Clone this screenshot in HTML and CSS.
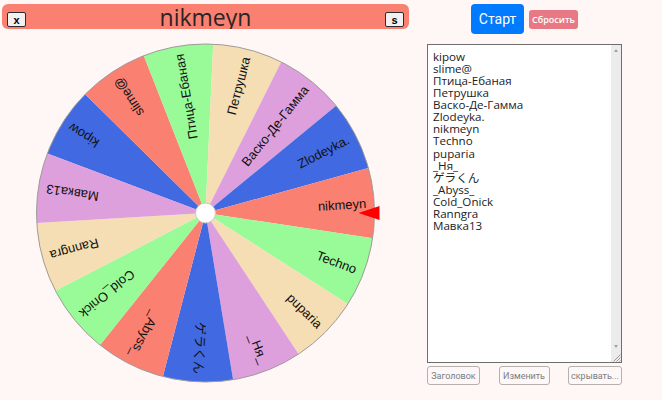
FILE: index.html
```html
<!DOCTYPE html>
<html lang="ru">
<head>
<meta charset="utf-8">
<title>Колесо</title>
<link rel="stylesheet" href="styles.css">
</head>
<body>
<div class="page">
  <div class="left">
    <div class="title-bar">
      <button class="tiny-btn">x</button>
      <span class="title">nikmeyn</span>
      <button class="tiny-btn">s</button>
    </div>
    <svg class="wheel" width="407" height="366" viewBox="0 0 407 366">
      <g transform="translate(203.5,184)">
        <!-- one 24° sector per name, rotated into place -->
        <g class="sectors">
          <path class="c-blue"   transform="rotate(-159.4)" d="M0,0 L169,0 A169,169 0 0,1 154.389,68.739 Z"/>
          <path class="c-salmon" transform="rotate(-135.4)" d="M0,0 L169,0 A169,169 0 0,1 154.389,68.739 Z"/>
          <path class="c-green"  transform="rotate(-111.4)" d="M0,0 L169,0 A169,169 0 0,1 154.389,68.739 Z"/>
          <path class="c-wheat"  transform="rotate(-87.4)"  d="M0,0 L169,0 A169,169 0 0,1 154.389,68.739 Z"/>
          <path class="c-plum"   transform="rotate(-63.4)"  d="M0,0 L169,0 A169,169 0 0,1 154.389,68.739 Z"/>
          <path class="c-blue"   transform="rotate(-39.4)"  d="M0,0 L169,0 A169,169 0 0,1 154.389,68.739 Z"/>
          <path class="c-salmon" transform="rotate(-15.4)"  d="M0,0 L169,0 A169,169 0 0,1 154.389,68.739 Z"/>
          <path class="c-green"  transform="rotate(8.6)"    d="M0,0 L169,0 A169,169 0 0,1 154.389,68.739 Z"/>
          <path class="c-wheat"  transform="rotate(32.6)"   d="M0,0 L169,0 A169,169 0 0,1 154.389,68.739 Z"/>
          <path class="c-plum"   transform="rotate(56.6)"   d="M0,0 L169,0 A169,169 0 0,1 154.389,68.739 Z"/>
          <path class="c-blue"   transform="rotate(80.6)"   d="M0,0 L169,0 A169,169 0 0,1 154.389,68.739 Z"/>
          <path class="c-salmon" transform="rotate(104.6)"  d="M0,0 L169,0 A169,169 0 0,1 154.389,68.739 Z"/>
          <path class="c-green"  transform="rotate(128.6)"  d="M0,0 L169,0 A169,169 0 0,1 154.389,68.739 Z"/>
          <path class="c-wheat"  transform="rotate(152.6)"  d="M0,0 L169,0 A169,169 0 0,1 154.389,68.739 Z"/>
          <path class="c-plum"   transform="rotate(176.6)"  d="M0,0 L169,0 A169,169 0 0,1 154.389,68.739 Z"/>
        </g>
        <circle class="rim" r="169"/>
        <!-- labels run along each sector's middle, ending near the rim -->
        <g class="labels">
          <text transform="rotate(-147.4)" x="161" y="4.5">kipow</text>
          <text transform="rotate(-123.4)" x="161" y="4.5">slime@</text>
          <text transform="rotate(-99.4)"  x="161" y="4.5">Птица-Ебаная</text>
          <text transform="rotate(-75.4)"  x="161" y="4.5">Петрушка</text>
          <text transform="rotate(-51.4)"  x="161" y="4.5">Васко-Де-Гамма</text>
          <text transform="rotate(-27.4)"  x="161" y="4.5">Zlodeyka.</text>
          <text transform="rotate(-3.4)"   x="161" y="4.5">nikmeyn</text>
          <text transform="rotate(20.6)"   x="161" y="4.5">Techno</text>
          <text transform="rotate(44.6)"   x="161" y="4.5">puparia</text>
          <text transform="rotate(68.6)"   x="161" y="4.5">_Ня_</text>
          <text transform="rotate(92.6)"   x="161" y="4.5">ゲラくん</text>
          <text transform="rotate(116.6)"  x="161" y="4.5">_Abyss_</text>
          <text transform="rotate(140.6)"  x="161" y="4.5">Cold_Onick</text>
          <text transform="rotate(164.6)"  x="161" y="4.5">Ranngra</text>
          <text transform="rotate(188.6)"  x="161" y="4.5">Мавка13</text>
        </g>
        <circle class="hub" r="10"/>
        <polygon class="pointer" points="153,0 174,-7 174,7"/>
      </g>
    </svg>
  </div>

  <div class="right">
    <div class="actions">
      <button class="btn-start">Старт</button>
      <button class="btn-reset">Сбросить</button>
    </div>
    <div class="list-box">
      <textarea class="names" spellcheck="false">kipow
slime@
Птица-Ебаная
Петрушка
Васко-Де-Гамма
Zlodeyka.
nikmeyn
Techno
puparia
_Ня_
ゲラくん
_Abyss_
Cold_Onick
Ranngra
Мавка13</textarea>
      <div class="vscroll" aria-hidden="true">
        <span class="arrow"><span class="tri-up"></span></span>
        <span class="track"></span>
        <span class="arrow"><span class="tri-down"></span></span>
        <span class="grip">
          <svg width="10" height="10" viewBox="0 0 10 10">
            <path d="M9.5,2.5 L2.5,9.5 M9.5,5.5 L5.5,9.5 M9.5,8.5 L8.5,9.5"/>
          </svg>
        </span>
      </div>
    </div>
    <div class="tools">
      <button class="tool-btn tool-title">Заголовок</button>
      <button class="tool-btn tool-edit">Изменить</button>
      <button class="tool-btn tool-hide">скрывать...</button>
    </div>
  </div>
</div>
</body>
</html>
```

FILE: styles.css
```css
html, body {
  margin: 0;
  background: #fef7f6;
}

body {
  font-family: "Open Sans", "Noto Sans", "Noto Sans CJK JP", sans-serif;
  color: #212529;
}

.page {
  display: flex;
  gap: 18px;
  padding: 4px 0 0 2px;
}

/* left column: title + wheel */
.left {
  width: 407px;
  display: flex;
  flex-direction: column;
}

.title-bar {
  height: 25px;
  background: #fa8072;
  border-radius: 6px;
  display: flex;
  justify-content: space-between;
  align-items: flex-start;
  padding: 0 5px;
  overflow: hidden;
}

.title {
  flex: 1;
  text-align: center;
  font-size: 23px;
  line-height: 27px;
  color: #2a2422;
}

.tiny-btn {
  margin-top: 8px;
  width: 19px;
  height: 15px;
  padding: 0;
  border: 1px solid #2b2b2b;
  border-radius: 2px;
  background: #f1f1f1;
  font-family: "Liberation Sans", Arial, sans-serif;
  font-weight: bold;
  font-size: 11px;
  line-height: 12px;
  color: #000;
}

.wheel {
  display: block;
}

.sectors path {
  stroke: none;
}

.c-blue   { fill: #4169e1; }
.c-salmon { fill: #fa8072; }
.c-green  { fill: #98fb98; }
.c-wheat  { fill: #f5deb3; }
.c-plum   { fill: #dda0dd; }

.rim {
  fill: none;
  stroke: #a09a98;
  stroke-width: 1;
}

.labels text {
  font-family: "Liberation Sans", Arial, "Noto Sans CJK JP", sans-serif;
  font-size: 13px;
  fill: #111;
  text-anchor: end;
}

.hub {
  fill: #fff;
  stroke: #c8c8c8;
  stroke-width: 1;
}

.pointer {
  fill: #ff0000;
}

/* right column: controls + name list */
.right {
  width: 195px;
  display: flex;
  flex-direction: column;
}

.actions {
  display: flex;
  justify-content: center;
  align-items: center;
  gap: 5px;
  height: 30px;
}

.btn-start {
  width: 53px;
  height: 30px;
  padding: 0;
  border: none;
  border-radius: 4px;
  background: #007bff;
  color: #fff;
  font-family: Roboto, sans-serif;
  font-size: 14px;
}

.btn-reset {
  width: 49px;
  height: 19px;
  padding: 0;
  border: none;
  border-radius: 3px;
  background: #e87883;
  color: #fff;
  font-family: "Open Sans", sans-serif;
  font-size: 9px;
  font-weight: 600;
}

.list-box {
  margin-top: 10px;
  box-sizing: border-box;
  width: 195px;
  height: 319px;
  border: 1px solid #6e6e6e;
  background: #fff;
  display: flex;
}

.names {
  flex: 1;
  min-width: 0;
  margin: 0;
  border: none;
  outline: none;
  resize: none;
  overflow: hidden;
  padding: 6px 5px;
  font-family: "Open Sans", "Noto Sans CJK JP", sans-serif;
  font-size: 11.6px;
  line-height: 12.07px;
  color: #222;
  background: #fff;
}

/* classic disabled vertical scrollbar with resize grip */
.vscroll {
  width: 10px;
  background: #ececec;
  display: flex;
  flex-direction: column;
}

.arrow {
  height: 10px;
  display: flex;
  align-items: center;
  justify-content: center;
}

.tri-up,
.tri-down {
  width: 0;
  height: 0;
  border-left: 2.5px solid transparent;
  border-right: 2.5px solid transparent;
}

.tri-up   { border-bottom: 3px solid #a3a3a3; }
.tri-down { border-top: 3px solid #a3a3a3; }

.track {
  flex: 1;
}

.grip {
  height: 11px;
  display: flex;
  align-items: flex-end;
}

.grip path {
  stroke: #9a9a9a;
  stroke-width: 1;
}

.tools {
  display: flex;
  justify-content: space-between;
  margin-top: 3px;
}

.tool-btn {
  height: 19px;
  padding: 0;
  border: 1px solid #b5b1b0;
  border-radius: 3px;
  background: #fdf8f7;
  color: #7c7c7c;
  font-family: Roboto, sans-serif;
  font-size: 9px;
}

.tool-title { width: 53px; }
.tool-edit  { width: 51px; }
.tool-hide  { width: 54px; }
```
